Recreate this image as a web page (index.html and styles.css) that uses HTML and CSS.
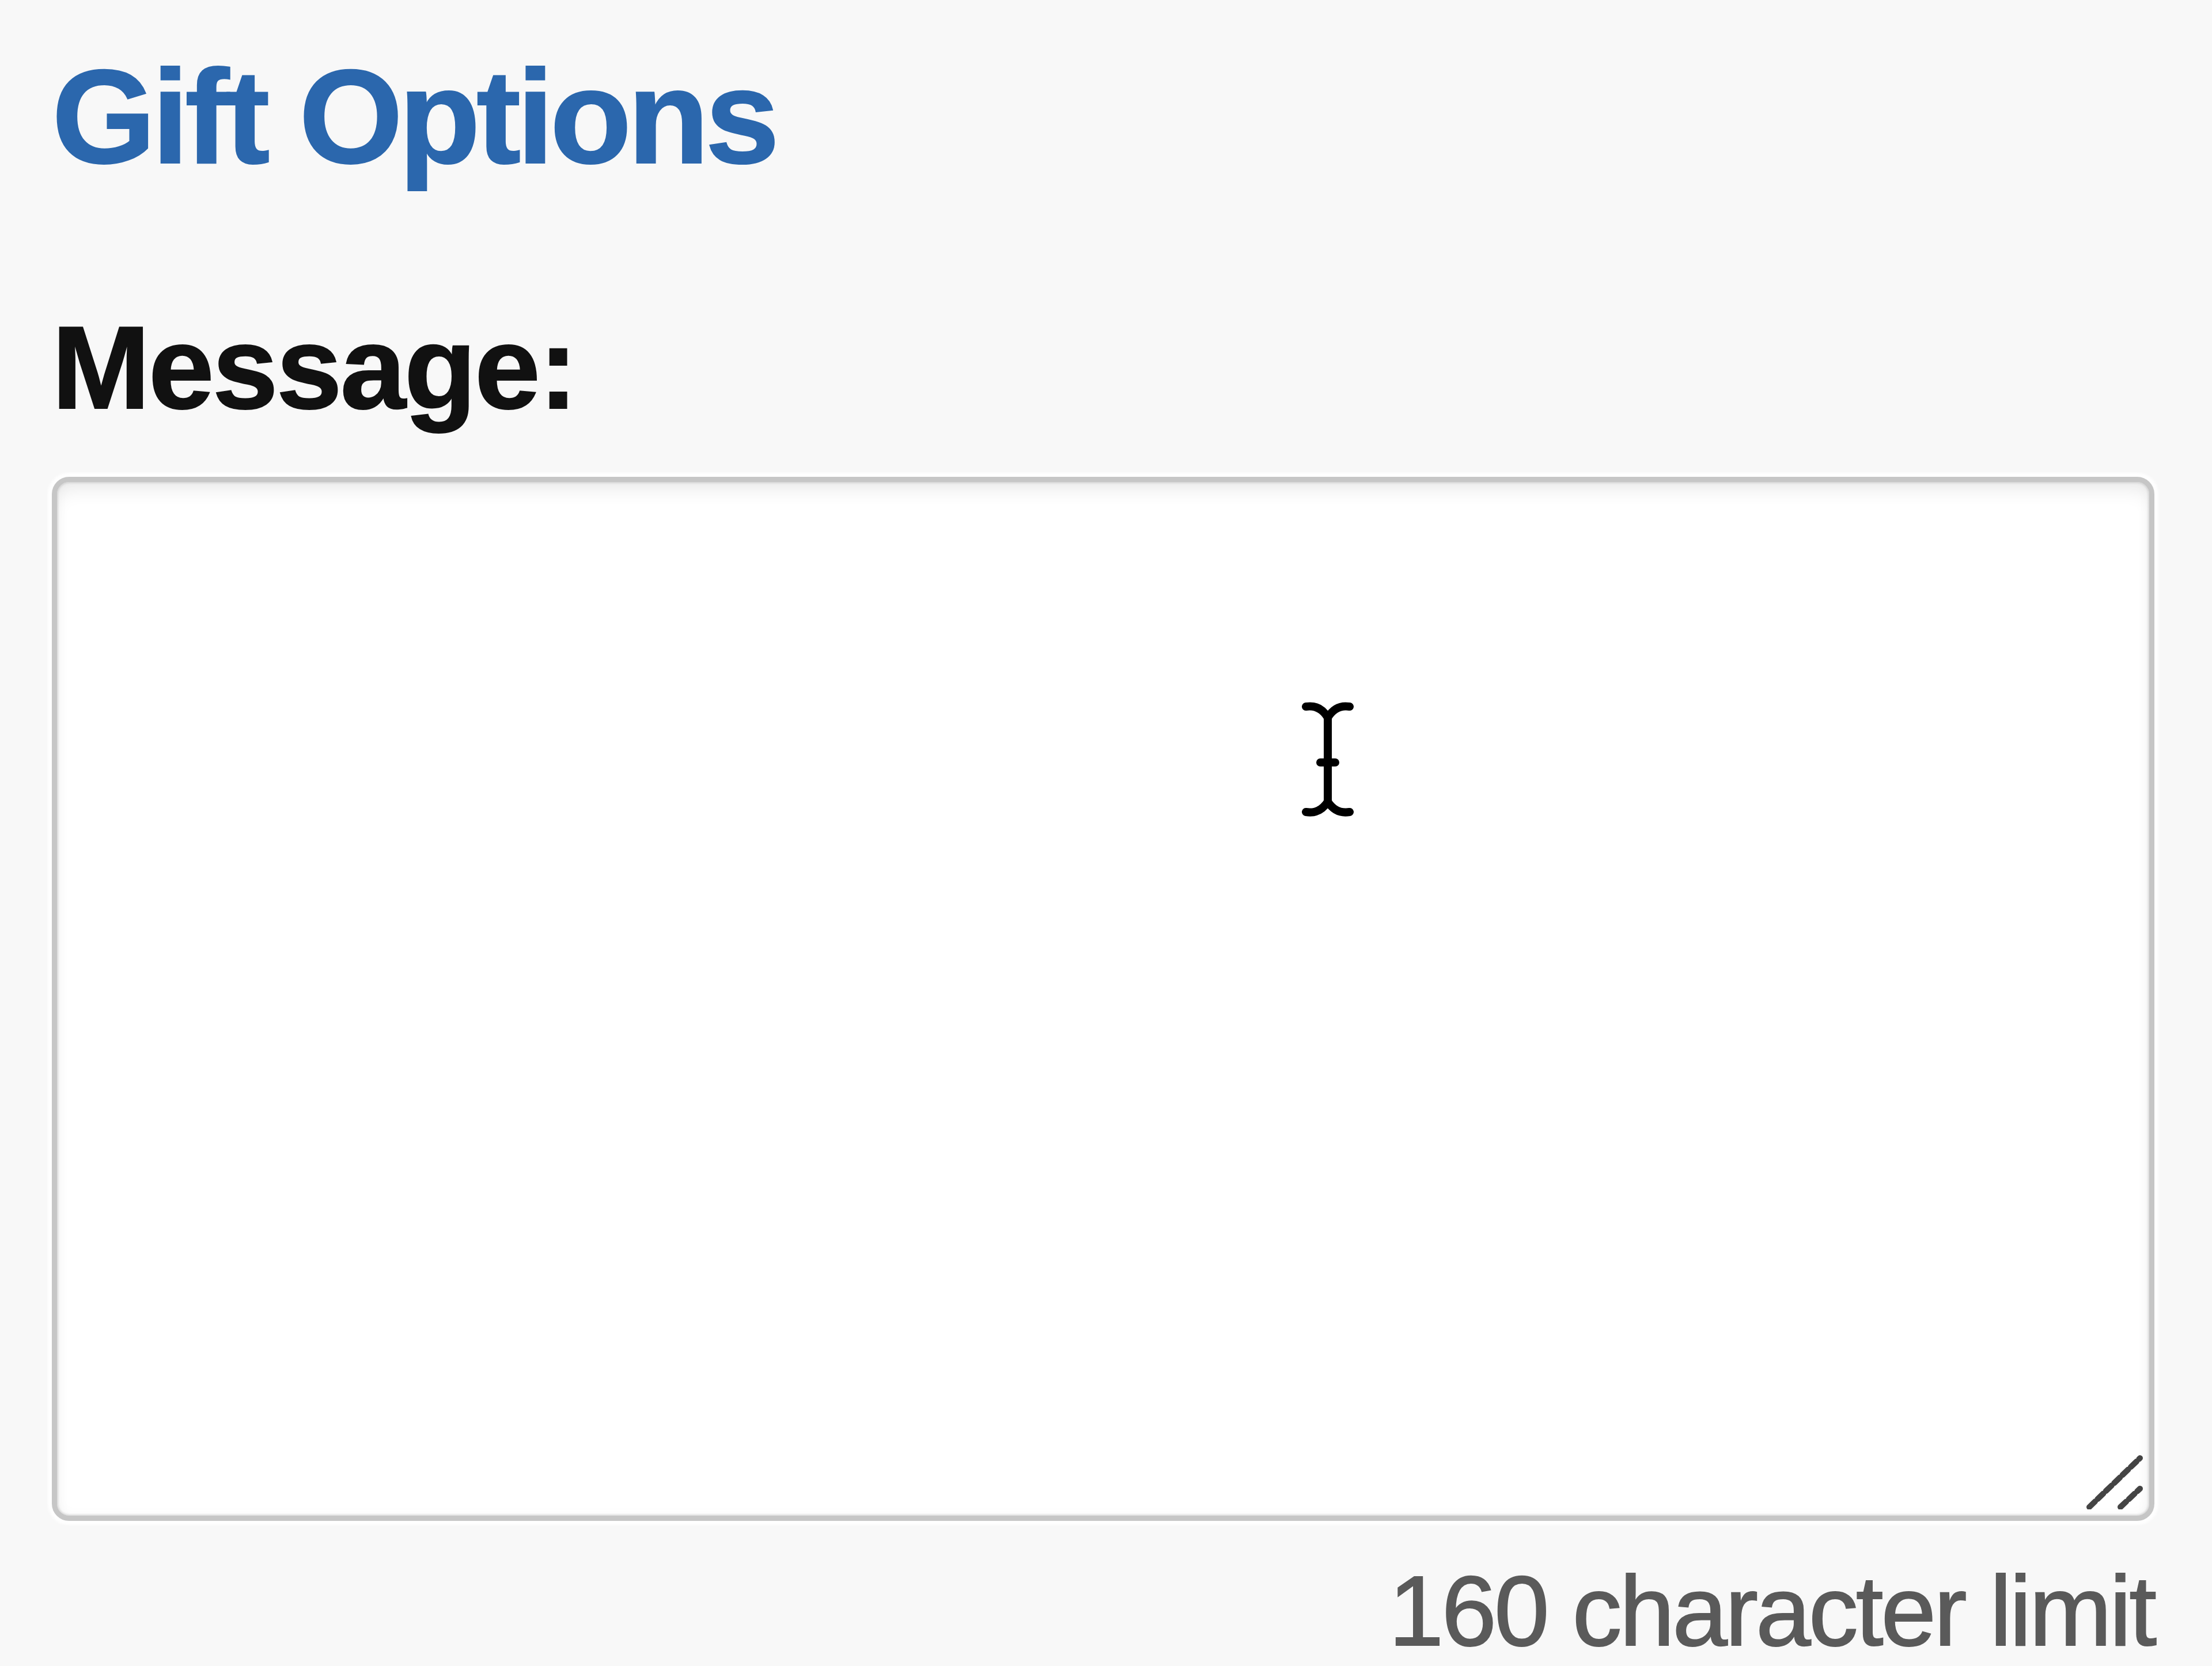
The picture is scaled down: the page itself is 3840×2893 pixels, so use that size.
FILE: index.html
```html
<!DOCTYPE html>
<html lang="en">
<head>
<meta charset="utf-8">
<title>Gift Options</title>
<link rel="stylesheet" href="styles.css">
</head>
<body>
<section class="gift">
  <h2 class="gift-title">Gift Options</h2>
  <label class="field-label" for="msg">Message:</label>
  <div class="field">
    <textarea id="msg" class="message-box"></textarea>
    <svg class="grip" viewBox="0 0 100 100" aria-hidden="true">
      <line x1="7" y1="96" x2="95" y2="11" />
      <line x1="61" y1="96" x2="95" y2="64" />
    </svg>
    <svg class="ibeam" viewBox="0 0 84 197" aria-hidden="true">
      <path class="ibeam-outline" d="M4 7 Q28 3 42 26 Q56 3 80 7 M42 26 V172 M29 104 H55 M4 190 Q28 194 42 172 Q56 194 80 190" />
      <path d="M4 7 Q28 3 42 26 Q56 3 80 7 M42 26 V172 M29 104 H55 M4 190 Q28 194 42 172 Q56 194 80 190" />
    </svg>
  </div>
  <p class="limit">160 character limit</p>
</section>
</body>
</html>
```
FILE: styles.css
```css
html, body {
  margin: 0;
  padding: 0;
  background: #f8f8f8;
}

body {
  font-family: "Liberation Sans", Arial, Helvetica, sans-serif;
  min-height: 2893px;
}

.gift {
  display: flex;
  flex-direction: column;
  align-items: flex-start;
  padding: 87px 100px 0 90px;
}

.gift-title {
  margin: 0;
  font-size: 232px;
  line-height: 1;
  font-weight: 700;
  letter-spacing: -7px;
  color: #2b67ad;
  -webkit-text-stroke: 2px #2b67ad;
}

.field-label {
  margin-top: 216px;
  font-size: 205px;
  line-height: 1;
  font-weight: 700;
  letter-spacing: -3px;
  color: #111;
  -webkit-text-stroke: 2px #111;
}

.field {
  position: relative;
  align-self: stretch;
  margin-top: 88px;
  height: 1813px;
}

.message-box {
  display: block;
  box-sizing: border-box;
  width: 100%;
  height: 100%;
  margin: 0;
  padding: 0;
  resize: none;
  outline: none;
  border: 9px solid #c6c6c6;
  border-radius: 30px;
  background: #fff;
  box-shadow:
    0 0 4px 7px rgba(255, 255, 255, 0.95),
    0 0 3px 1px rgba(190, 190, 190, 0.6),
    inset 0 0 3px 2px rgba(190, 190, 190, 0.5),
    inset 0 22px 30px -6px rgba(0, 0, 0, 0.07),
    inset 0 0 20px 4px rgba(0, 0, 0, 0.025);
}

.grip {
  position: absolute;
  right: 20px;
  bottom: 20px;
  width: 100px;
  height: 100px;
  stroke: #444;
  stroke-width: 10;
  stroke-linecap: round;
  stroke-dasharray: 14 6;
  fill: none;
}

.ibeam {
  position: absolute;
  left: 2173px;
  top: 392px;
  width: 84px;
  height: 197px;
  overflow: visible;
}

.ibeam path {
  fill: none;
  stroke: #000;
  stroke-width: 14;
  stroke-linecap: round;
}

.ibeam .ibeam-outline {
  stroke: #fff;
  stroke-width: 24;
  opacity: 0.8;
}

.limit {
  align-self: flex-end;
  margin: 70px 0 0 0;
  font-size: 172px;
  line-height: 1;
  letter-spacing: -4px;
  color: #5a5a5a;
  -webkit-text-stroke: 2px #5a5a5a;
}
```
